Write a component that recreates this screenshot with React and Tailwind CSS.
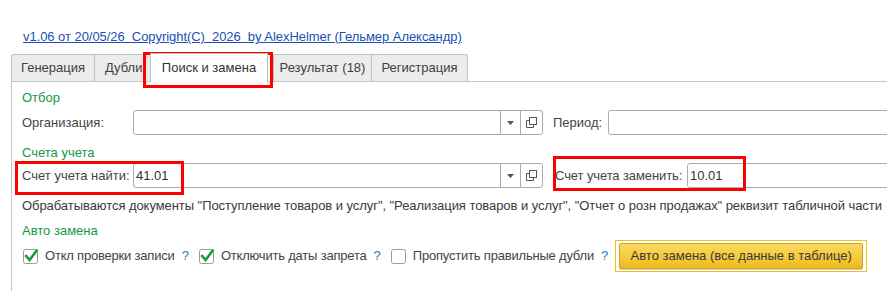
import React from "react";

function Check({ checked }) {
  return (
    <svg width="16" height="16" viewBox="0 0 16 16" className="shrink-0">
      <rect x="0.5" y="1.5" width="14" height="14" rx="2" fill="#fff" stroke="#9c9c9c" />
      {checked && (
        <path d="M3.2 8.2 L6.6 12 L13.6 2.6" fill="none" stroke="#1a9a3c" strokeWidth="2.6" strokeLinecap="square" />
      )}
    </svg>
  );
}

function Combo({ value, width }) {
  return (
    <div className={`flex h-[25px] ${width} border border-[#ababab] rounded-[3px] bg-white shrink-0`}>
      <div className="flex-1 flex items-center pl-[2px] text-[#333]">{value}</div>
      <div className="w-[20px] border-l border-[#ababab] flex items-center justify-center">
        <svg width="7" height="4" viewBox="0 0 7 4"><path d="M0 0 H7 L3.5 4 Z" fill="#555" /></svg>
      </div>
      <div className="w-[22px] border-l border-[#ababab] flex items-center justify-center">
        <svg width="11" height="11" viewBox="0 0 11 11">
          <rect x="3.5" y="0.5" width="7" height="7" fill="#fff" stroke="#555" />
          <path d="M3.5 3.5 H0.5 V10.5 H7.5 V7.5" fill="none" stroke="#555" />
        </svg>
      </div>
    </div>
  );
}

export default function App() {
  return (
    <div className="relative w-[887px] h-[291px] overflow-hidden bg-white text-[13px] leading-[16px] text-[#444] font-['Liberation_Sans',Arial,sans-serif]">
      <div className="pt-[29px] pl-[23px] h-[45px]">
        <a className="underline whitespace-pre text-[#2150b4] tracking-[-0.05px]">v1.06 от 20/05/26  Copyright(C)  2026  by AlexHelmer (Гельмер Александр)</a>
      </div>

      <div className="mt-[8px] ml-[11px]">
        <div className="flex items-end h-[29px] border-b border-[#c6c6c6]">
          <div className="w-[84px] h-[27px] border border-b-0 border-[#c0c0c0] bg-[#ececec] rounded-tl-[3px] flex items-center justify-center text-[#404040]">Генерация</div>
          <div className="w-[57px] -ml-px h-[27px] border border-b-0 border-[#c0c0c0] bg-[#ececec] flex items-center pl-[10px] text-[#404040]">Дубли</div>
          <div className="w-[118px] -ml-px h-[29px] -mb-px bg-white border border-b-0 border-[#c0c0c0] flex items-center justify-center text-[#333] relative z-10">Поиск и замена</div>
          <div className="w-[99px] ml-[5px] h-[27px] border border-b-0 border-[#c0c0c0] bg-[#ececec] flex items-center justify-center text-[#404040]">Результат (18)</div>
          <div className="w-[97px] -ml-px h-[27px] border border-b-0 border-[#c0c0c0] bg-[#ececec] rounded-tr-[3px] flex items-center justify-center text-[#404040]">Регистрация</div>
        </div>

        <div className="border-l border-[#c6c6c6] pl-[10px] h-[220px] pt-[8px]">
          <div className="text-[#17974a]">Отбор</div>

          <div className="mt-[4px] flex items-center h-[25px]">
            <div className="w-[111px] shrink-0">Организация:</div>
            <Combo value="" width="w-[410px]" />
            <div className="ml-[10px] w-[55px] shrink-0">Период:</div>
            <div className="h-[25px] w-[320px] shrink-0 border border-[#ababab] rounded-[3px] bg-white" />
          </div>

          <div className="mt-[10px] text-[#17974a]">Счета учета</div>

          <div className="mt-[2px] flex items-center h-[25px]">
            <div className="w-[111px] shrink-0">Счет учета найти:</div>
            <Combo value="41.01" width="w-[410px]" />
            <div className="ml-[10px] w-[134px] pl-[2px] shrink-0 whitespace-nowrap tracking-[-0.1px]">Счет учета заменить:</div>
            <div className="h-[25px] w-[240px] shrink-0 border border-[#ababab] rounded-[3px] bg-white flex items-center pl-[2px] text-[#333]">10.01</div>
          </div>

          <div className="mt-[10px] whitespace-nowrap text-[#3a3a3a] tracking-[-0.06px]">Обрабатываются документы "Поступление товаров и услуг", "Реализация товаров и услуг", "Отчет о розн продажах" реквизит табличной части</div>

          <div className="mt-[9px] text-[#17974a]">Авто замена</div>

          <div className="mt-[1px] flex items-center h-[32px] whitespace-nowrap">
            <div className="ml-[1px]"><Check checked /></div>
            <span className="ml-[6px] tracking-[-0.2px]">Откл проверки записи</span>
            <span className="ml-[7px] text-[#2a78c8]">?</span>
            <div className="ml-[10px]"><Check checked /></div>
            <span className="ml-[6px] tracking-[-0.2px]">Отключить даты запрета</span>
            <span className="ml-[7px] text-[#2a78c8]">?</span>
            <div className="ml-[10px]"><Check checked={false} /></div>
            <span className="ml-[6px] tracking-[-0.2px]">Пропустить правильные дубли</span>
            <span className="ml-[7px] text-[#2a78c8]">?</span>
            <div className="ml-[7px] px-[3px] py-[2px] border border-[#f2c40c]">
              <div className="w-[244px] h-[26px] rounded-[2px] border border-[#c9a43a] bg-linear-to-b from-[#fbdb5c] to-[#f0bb12] flex items-center justify-center text-[#3a3a3a] shadow-[0_1px_1px_rgba(0,0,0,0.2)]">
                Авто замена (все данные в таблице)
              </div>
            </div>
          </div>
        </div>
      </div>

      <div className="absolute left-[143px] top-[52px] w-[130px] h-[36px] border-[3px] border-[#f00] pointer-events-none" />
      <div className="absolute left-[15px] top-[161px] w-[169px] h-[34px] border-[3px] border-[#f00] pointer-events-none" />
      <div className="absolute left-[553px] top-[156px] w-[193px] h-[35px] border-[3px] border-[#f00] pointer-events-none" />
    </div>
  );
}
